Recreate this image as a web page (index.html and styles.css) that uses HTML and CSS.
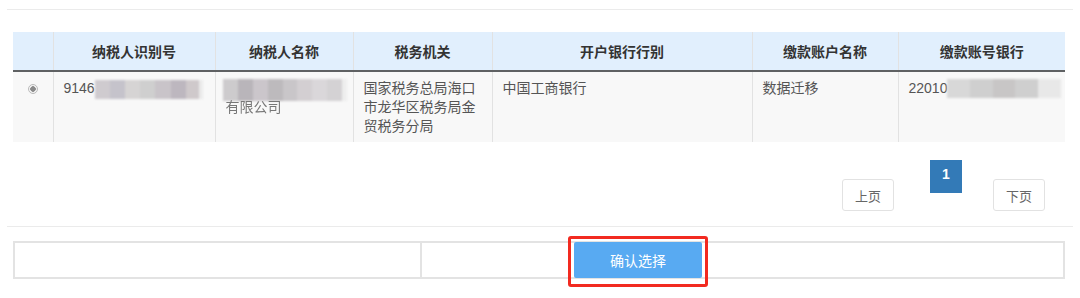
FILE: index.html
```
<!DOCTYPE html>
<html lang="zh-CN">
<head>
  <meta charset="UTF-8">
  <title>选择缴款账户</title>
  <link rel="stylesheet" href="styles.css">
</head>
<body>
  <div class="panel">
    <table class="grid">
      <colgroup>
        <col class="c-radio">
        <col class="c-id">
        <col class="c-name">
        <col class="c-org">
        <col class="c-bank">
        <col class="c-acct">
        <col class="c-no">
      </colgroup>
      <thead>
        <tr>
          <th></th>
          <th>纳税人识别号</th>
          <th>纳税人名称</th>
          <th>税务机关</th>
          <th>开户银行行别</th>
          <th>缴款账户名称</th>
          <th>缴款账号银行</th>
        </tr>
      </thead>
      <tbody>
        <tr>
          <td class="radio-cell"><span class="radio"></span></td>
          <td class="nowrap">9146<span class="mask mask-id"></span></td>
          <td class="nowrap"><span class="mask mask-name"></span><br><span class="faded">有限公司</span></td>
          <td>国家税务总局海口市龙华区税务局金贸税务分局</td>
          <td>中国工商银行</td>
          <td>数据迁移</td>
          <td class="nowrap">22010<span class="mask mask-no"></span></td>
        </tr>
      </tbody>
    </table>

    <div class="pager">
      <button class="page-btn prev">上页</button>
      <span class="page-num">1</span>
      <button class="page-btn next">下页</button>
    </div>

    <div class="footer">
      <div class="footer-row">
        <div class="footer-cell"></div>
        <div class="footer-cell actions">
          <span class="highlight">
            <button class="confirm">确认选择</button>
          </span>
        </div>
      </div>
    </div>
  </div>
</body>
</html>
```

FILE: styles.css
```
html, body {
  min-height: 298px;
}

body {
  margin: 0;
  background: #fff;
  font-family: "Liberation Sans", "Noto Sans CJK SC", sans-serif;
  font-size: 14px;
  color: #555;
}

.panel {
  margin: 9px 7px 0;
  padding-bottom: 19px;
  border-top: 1px solid #ebebeb;
}

.grid {
  width: 1052px;
  margin: 22px 6px 0;
  border-collapse: collapse;
  table-layout: fixed;
}

.c-radio { width: 40px; }
.c-id { width: 162px; }
.c-name { width: 138px; }
.c-org { width: 139px; }
.c-bank { width: 260px; }
.c-acct { width: 146px; }
.c-no { width: 167px; }

.grid th {
  height: 38px;
  padding: 0;
  background: #e1effd;
  color: #333;
  font-weight: bold;
  text-align: center;
  border-bottom: 2px solid #5f6163;
}

.grid th + th,
.grid td + td {
  border-left: 1px solid #e2e2e2;
}

.grid td {
  height: 71px;
  box-sizing: border-box;
  padding: 7px 10px 0;
  vertical-align: top;
  line-height: 19px;
  background: #f8f8f8;
  word-break: break-all;
}

.grid td.nowrap {
  white-space: nowrap;
  overflow: hidden;
  word-break: normal;
}

.radio-cell {
  text-align: center;
}

.radio {
  display: inline-block;
  width: 8px;
  height: 8px;
  margin-top: 5px;
  border: 1px solid #bbb;
  border-radius: 50%;
  background: radial-gradient(circle, #8a8a8a 0 2.5px, #f4f4f4 3px);
}

.mask {
  display: inline-block;
  vertical-align: top;
  height: 19px;
  filter: blur(1.2px);
  background: linear-gradient(90deg,
    #cfcbcf 0 14%, #c5c3cb 14% 28%, #d6d4d4 28% 42%, #cfcfcf 42% 56%,
    #c9c4c9 56% 70%, #bdb7bf 70% 84%, #cfc9cb 84% 96%, #ebebeb 96%);
}

.mask-id {
  width: 108px;
  margin-top: 1px;
}

.mask-name {
  width: 124px;
  height: 22px;
  margin: 0 0 -4px -3px;
  background: linear-gradient(90deg,
    #cdcbcd 0 12%, #b9b5ba 12% 24%, #cbc6cb 24% 36%, #bdbabd 36% 48%,
    #c9c6c9 48% 60%, #d3cfd2 60% 72%, #dad7da 72% 84%, #d4d2d4 84% 96%, #eee 96%);
}

.mask-no {
  width: 114px;
  background: linear-gradient(90deg,
    #d8d8d8 0 20%, #cfcfcf 20% 40%, #c8c6c6 40% 60%, #cfcfcf 60% 80%, #e8e8e8 80%);
}

.faded {
  color: #777;
  filter: blur(0.4px);
}

.pager {
  display: flex;
  justify-content: flex-end;
  align-items: flex-start;
  height: 84px;
  padding: 18px 28px 0 0;
  box-sizing: border-box;
}

.page-btn {
  width: 52px;
  height: 32px;
  margin-top: 19px;
  padding: 0;
  border: 1px solid #e2e2e2;
  border-radius: 3px;
  background: #fff;
  color: #666;
  font-family: inherit;
  font-size: 13px;
}

.page-num {
  width: 32px;
  height: 33px;
  margin: 0 31px 0 36px;
  padding-top: 6px;
  box-sizing: border-box;
  background: #337ab7;
  color: #fff;
  font-weight: bold;
  text-align: center;
}

.footer {
  border-top: 1px solid #ebebeb;
  padding: 14px 6px 0;
}

.footer-row {
  display: grid;
  grid-template-columns: 405px 1fr;
  width: 1052px;
  height: 38px;
  box-sizing: border-box;
  border: 2px solid #e3e3e3;
}

.footer-cell + .footer-cell {
  border-left: 2px solid #e3e3e3;
}

.actions {
  padding-left: 152px;
}

.highlight {
  position: relative;
  display: inline-block;
  margin-top: -1px;
}

.highlight::after {
  content: "";
  position: absolute;
  top: -6px;
  left: -6px;
  right: -6px;
  bottom: -9px;
  border: 3px solid #f22a20;
  border-radius: 3px;
}

.confirm {
  display: block;
  width: 128px;
  height: 36px;
  border: none;
  border-radius: 2px;
  background: #58aaf2;
  color: #fff;
  font-family: inherit;
  font-size: 14px;
}
```
